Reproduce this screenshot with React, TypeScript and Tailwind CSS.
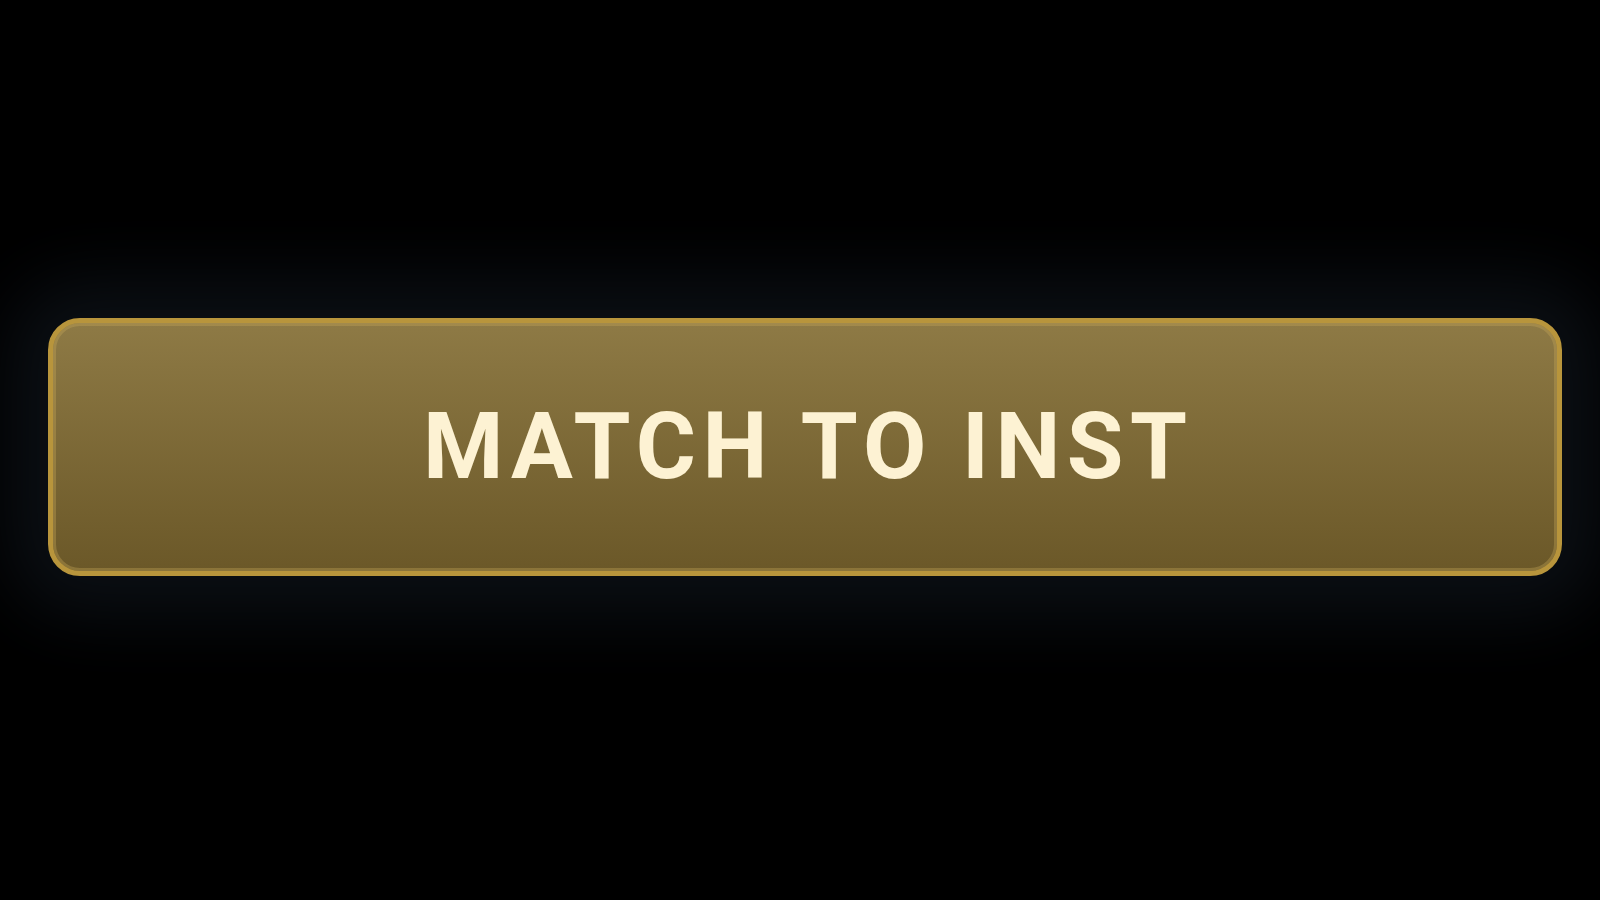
import React from 'react';

const App = () => {
  return (
    <div className="w-screen h-screen bg-black flex items-center pl-[48px] pb-[6px] overflow-hidden" style={{ fontFamily: 'Roboto, "Liberation Sans", sans-serif' }}>
      {/* zoomed action button */}
      <button
        className="w-[1514px] h-[258px] rounded-[32px] border-[5px] border-[#b8953c] bg-gradient-to-b from-[#8e7a45] to-[#6b5828] flex items-center justify-center shadow-[0_0_70px_40px_#0b0f14,inset_0_0_0_3px_rgba(200,170,90,0.35)]"
      >
        <span className="text-[92px] font-bold tracking-[0.07em] text-[#fdf2d3] leading-none pl-[0.07em]">MATCH TO INST</span>
      </button>
    </div>
  );
};

export default App;
